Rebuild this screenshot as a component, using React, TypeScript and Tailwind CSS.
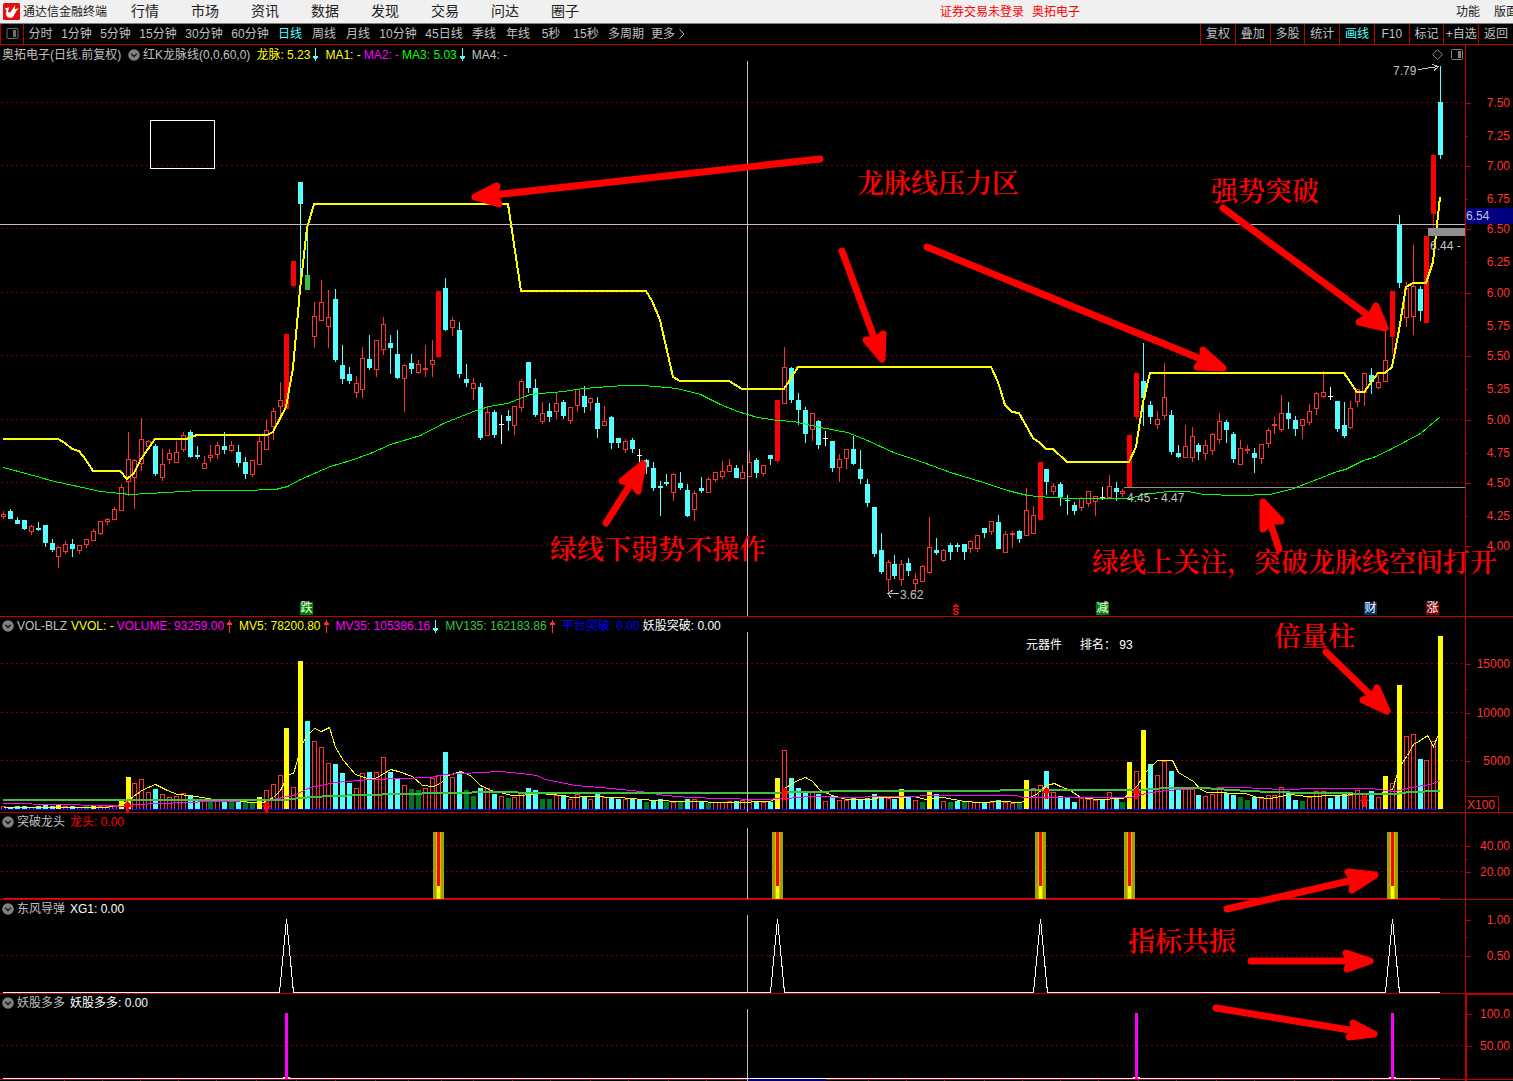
import React from "react";

const W = 1465;
const FULL = 1513;
const xAt = (i: number) => Math.floor(3.7 + i * 6.909);

/* kind high bodyTop bodyBottom low, one entry per trading day */
const CANDLES = `r 511 514 517 519|c 509 511 519 519|c 517 520 524 524|c 520 520 529 530|r 525 526 532 535|c 522 528 530 531|c 525 525 543 547|c 539 543 550 552|r 546 547 557 568|r 541 544 552 554|c 539 544 549 557|r 545 545 551 554|r 539 539 545 548|r 529 531 541 541|r 521 521 534 535|r 518 519 522 525|r 507 509 520 520|r 484 487 511 511|r 432 459 482 496|r 459 460 478 509|r 418 439 464 471|r 440 441 447 450|c 444 446 474 476|r 449 464 478 481|r 449 453 460 464|r 441 452 463 463|r 432 435 450 452|c 430 432 457 458|c 446 455 457 459|r 456 463 469 469|r 445 455 458 462|r 442 445 455 459|c 432 446 450 454|r 441 445 451 452|c 445 452 463 467|c 457 462 474 479|r 460 460 475 477|r 436 441 465 465|r 420 430 450 450|r 408 411 427 440|r 382 400 407 417|R 334 334 409 409|R 261 261 286 287|c 182 182 204 289|g 232 275 290 290|r 302 316 337 348|r 280 302 321 321|r 290 317 327 348|c 289 299 360 362|c 345 365 379 384|c 367 374 381 384|r 376 383 393 398|r 347 358 390 398|c 335 359 368 370|r 340 340 370 377|r 317 324 350 355|c 335 343 348 374|c 330 354 378 379|r 364 365 379 412|c 354 363 369 374|r 360 364 373 374|r 345 368 370 377|r 340 360 365 377|R 291 291 357 358|c 278 288 330 331|r 317 320 328 336|c 322 330 374 378|c 364 379 383 387|r 378 383 389 400|c 383 387 438 440|r 407 412 436 436|c 410 412 435 438|w 415 424 425 444|c 410 416 421 431|r 406 406 426 435|r 379 381 408 412|c 362 362 388 393|c 379 388 415 417|r 402 413 422 424|c 403 411 417 422|r 393 403 412 419|c 400 402 416 419|r 407 407 421 424|r 389 389 406 412|c 386 396 407 413|r 397 398 403 411|c 397 403 429 438|r 406 421 426 426|c 416 417 443 449|c 438 438 443 448|r 439 441 450 453|c 438 440 449 453|w 449 455 456 462|c 459 460 467 474|c 462 468 488 491|c 481 486 488 516|c 474 482 484 486|r 473 474 493 501|c 472 483 488 490|c 484 490 516 517|r 491 493 510 521|c 477 488 491 493|r 477 479 493 493|r 472 472 480 482|r 461 471 477 479|r 459 465 472 472|c 465 468 478 478|r 465 472 479 479|r 451 462 477 477|c 458 460 473 478|r 465 465 474 476|c 455 455 459 465|R 400 400 461 463|r 347 367 404 404|c 367 368 400 403|c 393 400 410 425|c 407 410 434 443|r 413 413 430 441|c 420 421 445 449|w 431 438 439 446|c 441 441 468 472|r 454 459 468 482|r 449 449 459 469|c 436 449 464 465|c 450 469 479 484|c 479 484 503 507|c 507 507 554 557|c 533 550 572 574|r 560 562 580 594|c 555 564 576 579|r 560 564 580 586|c 558 563 571 576|r 573 579 584 591|r 565 566 582 582|r 517 547 573 574|c 538 550 553 555|r 549 550 561 562|c 543 545 552 560|c 543 545 547 552|c 544 544 552 560|r 540 541 549 553|r 535 535 549 552|c 528 528 533 538|r 521 521 532 535|c 515 522 549 549|r 531 534 553 553|r 531 533 535 548|c 530 531 539 543|r 488 510 536 536|r 506 515 534 534|R 462 462 520 520|c 469 469 482 495|r 483 486 492 495|c 482 484 497 506|c 495 500 501 515|c 502 505 511 515|r 497 498 508 511|r 491 491 504 507|r 496 496 502 516|w 487 497 498 500|r 475 486 498 498|c 482 488 492 501|r 489 491 494 497|R 435 435 487 487|R 373 373 417 419|c 343 381 398 426|c 401 405 417 424|r 411 419 425 429|r 363 397 416 420|c 410 415 452 455|c 445 453 457 458|r 425 446 458 458|r 427 436 458 462|c 443 445 452 460|r 440 445 454 460|r 433 434 451 455|r 413 421 440 444|c 420 422 430 443|c 432 434 459 463|r 440 448 465 465|r 445 449 451 454|c 448 453 458 473|r 444 444 459 464|r 428 430 444 448|r 417 424 426 434|r 395 413 430 432|c 402 413 419 429|c 416 420 429 436|r 419 419 426 439|r 404 411 423 425|r 392 393 409 415|r 371 392 397 398|w 387 396 397 400|c 401 401 429 432|c 402 425 436 438|r 401 408 428 429|r 389 389 402 407|r 373 373 393 406|c 368 375 382 394|r 375 382 388 389|r 323 360 382 382|R 291 291 337 354|c 215 225 283 288|r 282 288 318 327|r 245 286 317 335|c 286 289 311 321|R 236 236 323 323|R 155 155 214 228|c 66 102 155 159`
  .split("|")
  .map((s) => {
    const [k, ...n] = s.split(" ");
    const [h, t, b, l] = n.map(Number);
    return { k, h, t, b, l };
  });

/* colour key and top edge of each volume bar */
const VOLUMES =
  `r806 c807 c806 c806 r807 c806 c805 c806 y805 r806 c806 r807 g806 y806 r806 r806 r805 y801 y777 r783 r779 r792 c789 r794 r797 r796 r793 c796 c801 r801 g801 r801 c801 g802 c801 g801 g802 y797 r790 r784 r775 y728 r787 y661 c721 r741 r747 r763 c764 c773 c783 r788 r773 c772 r772 r757 c772 c779 r785 g789 g790 r788 r778 r775 c752 r777 c772 g790 g796 c788 r788 c794 r796 g798 r797 r793 c788 c790 g799 g799 r795 c795 r799 r794 c797 r799 c794 r797 c797 c799 r799 c799 c799 g802 c801 c799 g802 r802 g802 c799 r799 c801 g803 r802 r802 r801 c801 r800 r800 c801 r802 c802 y778 r750 c778 c788 c792 r792 c794 r801 c796 r800 r800 c798 c799 c798 c794 c797 r798 c799 y789 c796 r800 g802 y792 c794 r801 g802 c801 g802 r801 r802 c802 r802 c800 r802 r803 g803 y780 r788 r785 c771 r792 c796 c798 c802 r798 r799 r800 c800 r792 c798 g802 y762 r771 y730 c764 r775 r761 c771 c788 r788 r789 c795 r796 r794 r787 c793 c795 g797 g800 c797 r798 r795 r795 r787 c792 c800 g801 r797 r791 r791 c798 c795 c793 r795 r790 r794 c791 r797 y776 r783 y685 r736 r734 c759 r760 r741 y636`
    .split(" ")
    .map((s) => ({ k: s[0], t: Number(s.slice(1)) }));

const DRAGON =
  "3,439 58,439 65,443 72,449 79,451 86,460 93,471 120,471 127,479 134,473 141,459 155,439 186,439 197,435 267,435 273,432 286,407 293,368 300,290 307,228 314,204 508,204 521,291 646,291 652,301 660,320 673,377 680,381 729,381 742,389 784,389 798,367 991,367 998,382 1005,405 1012,412 1019,413 1033,438 1040,443 1046,449 1053,449 1067,462 1129,462 1136,447 1143,402 1150,373 1344,373 1357,392 1364,392 1378,373 1385,373 1392,367 1399,330 1406,287 1413,283 1426,283 1433,262 1440,197";
const MA3 =
  "3,467 40,477 50,480 100,491 130,494 165,492 200,490 240,490 275,489 287,486 300,479 330,466 350,460 370,453 390,444 420,435 443,423 473,411 480,409 488,406 507,403 522,397 530,394 540,393 563,391 583,388 623,385 643,385 677,388 700,394 720,404 737,411 757,417 777,420 793,421 820,427 847,432 867,440 893,452 923,462 950,472 983,482 1007,490 1027,495 1050,497 1073,498 1130,498 1143,494 1168,491 1188,491 1203,494 1237,495 1270,494 1293,488 1337,471 1345,469 1363,460 1373,457 1390,449 1420,433 1440,416";
const MV5 =
  "3,807 100,807 117,806 127,801 133,796 143,789 155,784 167,790 177,794 190,795 213,799 230,801 263,802 273,797 280,790 288,774 293,773 302,743 307,735 314,728 321,731 329,727 335,747 343,760 355,774 370,779 377,777 390,769 398,771 412,776 422,785 433,786 440,783 448,775 460,771 470,775 480,785 493,791 500,792 511,795 521,795 536,793 554,794 571,797 589,796 618,797 643,799 654,800 682,801 732,802 770,801 777,797 784,788 795,781 805,777 812,781 820,790 832,795 846,799 871,799 879,797 900,797 914,796 925,799 943,797 964,801 979,802 1000,801 1021,802 1027,798 1036,794 1046,785 1054,783 1060,786 1070,790 1080,797 1097,799 1123,798 1130,792 1137,785 1145,772 1157,760 1172,760 1178,772 1193,781 1200,789 1207,792 1245,793 1257,797 1270,798 1290,794 1307,796 1337,795 1380,793 1392,789 1397,773 1402,762 1407,755 1413,744 1420,740 1427,735 1433,746 1438,734";
const MV35 =
  "3,803 60,804 100,805 125,806 135,804 160,803 210,801 270,800 282,797 293,795 310,787 335,782 370,779 430,777 445,774 480,772 500,771 520,773 536,775 545,779 560,782 575,785 600,787 640,791 665,795 690,797 720,798 760,799 785,798 810,796 850,797 880,796 960,795 1016,795 1022,797 1130,797 1145,793 1165,790 1200,788 1240,787 1262,788 1280,789 1320,788 1370,788 1395,791 1410,787 1430,784 1440,780";
const MV135 =
  "3,800 285,800 300,798 330,796 400,794 445,793 500,792 535,793 770,793 800,792 860,791 990,791 1010,790 1140,790 1165,788 1205,788 1230,790 1270,792 1310,793 1395,794 1410,792 1440,791";

const FILL: Record<string, string> = { c: "#54ffff", R: "#ff0000", g: "#40c040", y: "#ffff00" };

function Candle({ x, k, h, t, b, l }: { x: number; k: string; h: number; t: number; b: number; l: number }) {
  if (k === "w")
    return <path d={`M${x} ${h}h1V${l}h-1zM${x - 2} ${t}h5v1h-5z`} fill="#ffffff" />;
  if (k === "r")
    return (
      <g>
        <path d={`M${x} ${h}h1V${t}h-1zM${x} ${b}h1V${l}h-1z`} fill="#ff3232" />
        {b - t < 3 ? (
          <rect x={x - 2} y={t} width={5} height={b - t} fill="#ff3232" />
        ) : (
          <rect x={x - 1.5} y={t + 0.5} width={4} height={b - t - 1} fill="none" stroke="#ff3232" />
        )}
      </g>
    );
  const wick = k === "R" ? "#ff0000" : "#54ffff";
  return (
    <g>
      <rect x={x} y={h} width={1} height={l - h} fill={wick} />
      <rect x={x - 2} y={t} width={5} height={b - t} fill={FILL[k]} />
    </g>
  );
}

function Plot({ top, height, grid, label, children }: { top: number; height: number; grid: number[]; label: string; children: React.ReactNode }) {
  return (
    <svg
      role="img"
      aria-label={label}
      viewBox={`0 ${top} ${W} ${height}`}
      height={height}
      preserveAspectRatio="none"
      shapeRendering="crispEdges"
      className="block w-full"
    >
      {grid.map((y) => (
        <line key={y} x1={1} x2={W} y1={y + 0.5} y2={y + 0.5} stroke="#800000" strokeDasharray="2 3" />
      ))}
      {children}
      <rect x={747} y={top} width={1} height={height} fill="#c0c0c0" />
    </svg>
  );
}

type Tick = { y: number; text?: string };

const MINOR = new Set(["7.25", "6.75", "6.25", "5.75", "5.25", "4.75", "4.25"]);

function Axis({ top, ticks, bright, children }: { top: number; ticks: Tick[]; bright?: boolean; children?: React.ReactNode }) {
  return (
    <div className={bright ? "relative w-12 flex-none border-l-2 border-t border-[#c00000]" : "relative w-12 flex-none border-l border-[#c00000]"}>
      {ticks.map((t) => (
        <div
          key={t.y}
          className="absolute inset-x-0 flex h-3 -translate-y-1/2 items-center justify-between pr-[3px] text-xs leading-3 text-[#ff3232]"
          style={{ top: t.y - top }}
        >
          <span className={t.text && !MINOR.has(t.text) ? "h-px w-[5px] bg-[#c00000]" : "h-px w-[2px] bg-[#c00000]"} />
          <span>{t.text}</span>
        </div>
      ))}
      {children}
    </div>
  );
}

function Fold({ name }: { name: string }) {
  return (
    <button type="button" aria-label={`${name} 菜单`} className="block size-3 flex-none">
      <svg viewBox="0 0 13 13" className="size-3">
        <circle cx="6.5" cy="6.5" r="6.3" fill="#808080" />
        <path d="M3.5 5.2l3 3 3-3" fill="none" stroke="#101010" strokeWidth="1.4" />
      </svg>
    </button>
  );
}

function Trend({ up }: { up?: boolean }) {
  return (
    <svg viewBox="0 0 5 13" className="mr-1 h-[13px] w-[5px] flex-none" shapeRendering="crispEdges" aria-hidden="true">
      {up ? (
        <path d="M2 0h1v13H2zM1 2h3v1H1zM0 3h5v2H0z" fill="#ff3232" />
      ) : (
        <path d="M2 0h1v13H2zM1 10h3v1H1zM0 8h5v2H0z" fill="#54ffff" />
      )}
    </svg>
  );
}

function Head({ children, tall }: { children: React.ReactNode; tall?: boolean }) {
  return (
    <header
      className={
        tall
          ? "flex h-4 items-center gap-[3px] whitespace-nowrap pl-[2px] pt-[3px] text-xs leading-4"
          : "flex h-[15px] items-center gap-[3px] whitespace-nowrap pl-[2px] pt-[3px] text-xs leading-[15px]"
      }
    >
      {children}
    </header>
  );
}

const PERIODS: [string, string][] = [
  ["分时", "w-[33px]"],
  ["1分钟", "w-[39px]"],
  ["5分钟", "w-[39px]"],
  ["15分钟", "w-[46px]"],
  ["30分钟", "w-[46px]"],
  ["60分钟", "w-[46px]"],
  ["日线", "w-[34px]"],
  ["周线", "w-[34px]"],
  ["月线", "w-[34px]"],
  ["10分钟", "w-[46px]"],
  ["45日线", "w-[46px]"],
  ["季线", "w-[34px]"],
  ["年线", "w-[34px]"],
  ["5秒", "w-[32px]"],
  ["15秒", "w-[38px]"],
  ["多周期", "w-[42px]"],
];

/* tail, tip and the two barb ends of each marker arrow */
const ARROWS = [
  [820, 159, 475, 197, 497, 186, 499, 204],
  [842, 251, 882, 359, 866, 340, 883, 334],
  [927, 247, 1223, 368, 1203, 350, 1197, 367],
  [1223, 208, 1385, 328, 1376, 306, 1359, 322],
  [606, 523, 643, 464, 622, 481, 638, 491],
  [1279, 549, 1263, 502, 1281, 521, 1263, 529],
  [1326, 652, 1387, 711, 1377, 688, 1363, 700],
  [1227, 909, 1375, 875, 1348, 872, 1352, 890],
  [1251, 961, 1370, 961, 1346, 953, 1347, 969],
  [1216, 1008, 1374, 1034, 1353, 1023, 1349, 1037],
];

const NOTES: [number, number, string][] = [
  [857, 182, "龙脉线压力区"],
  [1211, 190, "强势突破"],
  [550, 548, "绿线下弱势不操作"],
  [1092, 561, "绿线上关注，突破龙脉线空间打开"],
  [1274, 635, "倍量柱"],
  [1128, 940, "指标共振"],
];

const LABELS: [number, number, string, string][] = [
  [1393, 71, "7.79", "text-[#c0c0c0]"],
  [900, 595, "3.62", "text-[#c0c0c0]"],
  [1127, 498, "4.45 - 4.47", "text-[#c0c0c0]"],
  [1430, 246, "6.44 -", "text-[#c0c0c0]"],
  [1026, 645, "元器件", "text-white"],
  [1080, 645, "排名： 93", "text-white"],
];

const BADGES: [number, string, string][] = [
  [300, "跌", "bg-[#008000]"],
  [1096, "减", "bg-[#008000]"],
  [1364, "财", "bg-[#003366]"],
  [1426, "涨", "bg-[#800000]"],
];

const CHART_TOP = 45;
const pct = (x: number) => `${(x / FULL) * 100}%`;

export default function App() {
  return (
    <main className="flex min-h-screen flex-col overflow-hidden bg-black font-['Liberation_Sans','Noto_Sans_CJK_SC',sans-serif] text-xs text-[#c0c0c0]">
      <div className="flex h-6 items-center border-b border-[#808080] bg-[#f0f0f0] pl-[3px] text-[#202020]">
        <svg viewBox="0 0 17 17" className="size-[17px] flex-none" aria-hidden="true">
          <rect width="17" height="17" rx="1.5" fill="#e01010" />
          <path d="M1.500 5.800L6.200 4.300 5 8.500Q5.600 10.200 7.600 9L12.300 2 11.600 6.200 15.800 5.200Q12.600 8 11.400 11.500 9.800 15.200 6.500 14.800 3 14 3 10.500L3.600 7.200z" fill="#fff" />
        </svg>
        <h1 className="ml-[3px] w-[92px] whitespace-nowrap text-xs">通达信金融终端</h1>
        <nav aria-label="主菜单" className="flex pb-[2px] text-sm">
          {["行情", "市场", "资讯", "数据", "发现", "交易", "问达", "圈子"].map((m) => (
            <button key={m} type="button" className="w-[60px] text-center leading-5">
              {m}
            </button>
          ))}
        </nav>
        <p className="ml-auto mr-[376px] flex gap-2 whitespace-nowrap text-[#ff0000]">
          <span>证券交易未登录</span>
          <span>奥拓电子</span>
        </p>
        <div className="flex w-[57px] flex-none gap-[14px] overflow-hidden whitespace-nowrap">
          <button type="button" className="flex-none">功能</button>
          <button type="button" className="flex-none">版面</button>
        </div>
      </div>

      <div className="flex h-[21px] border-b border-l border-[#c00000]">
        <button type="button" aria-label="侧栏" className="flex w-[23px] flex-none items-center justify-center border-r border-[#c00000]">
          <svg viewBox="0 0 13 12" className="h-3 w-[13px]" fill="none" stroke="#707070">
            <rect x="1" y="0.500" width="11" height="10" rx="1" />
            <rect x="7.500" y="2.500" width="2" height="6" fill="#707070" />
          </svg>
        </button>
        <nav aria-label="周期" className="flex whitespace-nowrap">
          {PERIODS.map(([p, w]) => (
            <button key={p} type="button" className={`${w} text-center leading-5 ${p === "日线" ? "text-[#54ffff]" : ""}`}>
              {p}
            </button>
          ))}
          <button type="button" className="flex w-[42px] items-center justify-center gap-1 leading-5">
            更多
            <svg viewBox="0 0 6 10" className="h-[10px] w-[6px]" fill="none" stroke="#c0c0c0">
              <path d="M0.500 0.500L5 5 0.500 9.500" />
            </svg>
          </button>
        </nav>
        <nav aria-label="工具" className="ml-auto grid w-[313px] grid-cols-9">
          {["复权", "叠加", "多股", "统计", "画线", "F10", "标记", "+自选", "返回"].map((t) => (
            <button key={t} type="button" className={`whitespace-nowrap border-l border-[#c00000] text-center leading-5 ${t === "画线" ? "text-[#54ffff]" : ""}`}>
              {t}
            </button>
          ))}
        </nav>
      </div>

      <div className="relative">
        <section className="flex border-b border-[#c00000]">
          <div className="min-w-0 flex-1">
            <Head tall>
              <h2 className="w-[123px]">奥拓电子(日线.前复权)</h2>
              <Fold name="红K龙脉线" />
              <span>红K龙脉线(0,0,60,0)</span>
              <span className="ml-[3px] text-[#ffff00]">龙脉: 5.23</span>
              <Trend />
              <span className="text-[#ffff00]">MA1: -</span>
              <span className="text-[#ff00ff]">MA2: -</span>
              <span className="text-[#00ff00]">MA3: 5.03</span>
              <Trend />
              <span>MA4: -</span>
              <span className="ml-auto flex items-center gap-2 pr-[2px]">
                <svg viewBox="0 0 11 11" className="size-[11px]" fill="none" stroke="#909090">
                  <path d="M5.500 0.700L10.300 5.500 5.500 10.300 0.700 5.500z" />
                </svg>
                <svg viewBox="0 0 12 11" className="h-[11px] w-3" fill="none" stroke="#808080">
                  <rect x="0.500" y="0.500" width="11" height="10" rx="1" />
                  <rect x="7.500" y="2.500" width="2" height="6" fill="#808080" />
                </svg>
              </span>
            </Head>
            <Plot top={61} height={555} grid={[102, 165, 228, 292, 355, 419, 482, 545]} label="日线 K 线图">
              <rect x={150.5} y={120.5} width={64} height={48} fill="none" stroke="#ffffff" />
              {CANDLES.map((c, i) => (
                <Candle key={i} x={xAt(i)} {...c} />
              ))}
              <polyline points={MA3} transform="translate(0.5 0.5)" fill="none" stroke="#00ff00" />
              <polyline points={DRAGON} fill="none" stroke="#ffff00" strokeWidth={2} />
              <rect x={1124} y={487} width={341} height={1} fill="#909090" />
              <rect x={1428} y={228} width={37} height={8} fill="#909090" />
              <rect x={0} y={224} width={W} height={1} fill="#c0c0c0" />
              <path d="M1418.500 69.500L1438 66.500M1432.500 64.500L1438.500 66.500 1434 70.500" fill="none" stroke="#c0c0c0" />
              <path d="M888 593.500H899M893 590L888 593.500 891 598" fill="none" stroke="#c0c0c0" />
              <path
                d="M955 604h2v1h1v1h1v1h-6v-1h1v-1h1zM954 608h4v1h1v1h-2v-1h-2v2h3v1h1v2h-1v1h-4v-1h-1v-1h2v1h2v-2h-3v-1h-1v-2h1z"
                fill="#ff0000"
              />
            </Plot>
          </div>
          <Axis
            top={45}
            ticks={[
              { y: 103, text: "7.50" },
              { y: 136, text: "7.25" },
              { y: 166, text: "7.00" },
              { y: 199, text: "6.75" },
              { y: 229, text: "6.50" },
              { y: 262, text: "6.25" },
              { y: 293, text: "6.00" },
              { y: 326, text: "5.75" },
              { y: 356, text: "5.50" },
              { y: 389, text: "5.25" },
              { y: 420, text: "5.00" },
              { y: 453, text: "4.75" },
              { y: 483, text: "4.50" },
              { y: 516, text: "4.25" },
              { y: 546, text: "4.00" },
            ]}
          >
            <output className="absolute inset-x-0 h-4 bg-[#000080] text-xs leading-4 text-[#c0c0e0]" style={{ top: 208 - CHART_TOP }}>
              6.54
            </output>
          </Axis>
        </section>

        <section className="flex border-b border-[#c00000]">
          <div className="min-w-0 flex-1">
            <Head>
              <Fold name="VOL-BLZ" />
              <h2>VOL-BLZ</h2>
              <span className="ml-px text-[#ffff00]">VVOL: -</span>
              <span className="text-[#ff00ff]">VOLUME: 93259.00</span>
              <Trend up />
              <span className="text-[#ffff00]">MV5: 78200.80</span>
              <Trend up />
              <span className="text-[#ff00ff]">MV35: 105386.16</span>
              <Trend />
              <span className="text-[#40c040]">MV135: 162183.86</span>
              <Trend up />
              <span className="text-[#0000ff]">平台突破: 0.00</span>
              <span className="text-white">妖股突破: 0.00</span>
            </Head>
            <Plot top={632} height={180} grid={[663, 712, 760]} label="成交量">
              {VOLUMES.map(({ k, t }, i) => {
                const x = xAt(i) - 2;
                return k === "r" ? (
                  <path key={i} d={`M${x + 0.5} 809V${t + 0.5}h4V809`} fill="none" stroke="#ff3232" />
                ) : (
                  <rect key={i} x={x} y={t} width={5} height={809 - t} fill={k === "g" ? "#007820" : FILL[k]} />
                );
              })}
              <rect x={1} y={809} width={1440} height={1} fill="#0000ff" />
              <polyline points={MV5} transform="translate(0.5 0.5)" fill="none" stroke="#ffff00" />
              <polyline points={MV35} transform="translate(0.5 0.5)" fill="none" stroke="#ff00ff" />
              <polyline points={MV135} fill="none" stroke="#40c040" strokeWidth={2} />
              {[
                [127, 801],
                [266, 801],
                [784, 788],
                [1046, 787],
                [1136, 787],
                [1364, 795],
              ].map(([x, y]) => (
                <path key={x} d={`M${x} ${y}h1l4 6h-3v6h-3v-6h-3z`} fill="#ff0000" />
              ))}
            </Plot>
          </div>
          <Axis
            top={617}
            ticks={[
              { y: 664, text: "15000" },
              { y: 689 },
              { y: 713, text: "10000" },
              { y: 737 },
              { y: 761, text: "5000" },
            ]}
          >
            <span className="absolute bottom-0 left-0 h-4 w-[33px] border-r border-t border-[#c00000] pl-px text-xs leading-4 text-[#ff3232]">X100</span>
          </Axis>
        </section>

        <section className="flex border-b border-[#c00000]">
          <div className="min-w-0 flex-1">
            <Head>
              <Fold name="突破龙头" />
              <h2>突破龙头</h2>
              <span className="ml-[2px] text-[#ff0000]">龙头: 0.00</span>
            </Head>
            <Plot top={828} height={71} grid={[845, 871]} label="突破龙头">
              <rect x={3} y={898} width={1437} height={1} fill="#ff0000" />
              {[63, 112, 150, 163, 201].map((i) => {
                const x = xAt(i);
                return (
                  <g key={i}>
                    <rect x={x - 5} y={832} width={11} height={67} fill="#a0a000" />
                    <rect x={x - 2} y={832} width={5} height={67} fill="#d0c000" />
                    <rect x={x - 1} y={832} width={3} height={54} fill="#ff0000" />
                    <rect x={x - 1} y={886} width={3} height={13} fill="#ffff00" />
                  </g>
                );
              })}
            </Plot>
          </div>
          <Axis top={813} ticks={[{ y: 846, text: "40.00" }, { y: 859 }, { y: 872, text: "20.00" }]} />
        </section>

        <section className="flex border-b border-[#c00000]">
          <div className="min-w-0 flex-1">
            <Head>
              <Fold name="东风导弹" />
              <h2>东风导弹</h2>
              <span className="ml-[2px] text-white">XG1: 0.00</span>
            </Head>
            <Plot top={915} height={78} grid={[955]} label="东风导弹">
              <path
                d={`M3 992.500${[41, 112, 150, 201].map((i) => `H${xAt(i) - 6.5}L${xAt(i) + 0.5} 919L${xAt(i) + 7.5} 992.500`).join("")}H1440`}
                fill="none"
                stroke="#ffffff"
              />
            </Plot>
          </div>
          <Axis top={900} ticks={[{ y: 920, text: "1.00" }, { y: 937 }, { y: 956, text: "0.50" }]} />
        </section>

        <section className="flex">
          <div className="min-w-0 flex-1">
            <Head>
              <Fold name="妖股多多" />
              <h2>妖股多多</h2>
              <span className="ml-[2px] text-white">妖股多多: 0.00</span>
            </Head>
            <Plot top={1009} height={72} grid={[1045]} label="妖股多多">
              <rect x={3} y={1078} width={1437} height={1} fill="#ffffff" />
              {[41, 164, 201].map((i) => (
                <g key={i}>
                  <rect x={xAt(i) - 3} y={1077} width={7} height={1} fill="#ffffff" />
                  <rect x={xAt(i) - 1} y={1013} width={3} height={66} fill="#ff00ff" />
                </g>
              ))}
              <rect x={0} y={1079} width={W} height={1} fill="#c00000" />
              {[64, 102, 140, 178, 216, 256, 296, 335, 375, 408, 441, 473, 512, 550, 590, 628, 668, 706, 868, 906, 944, 984, 1022, 1060, 1098, 1138, 1176, 1216, 1254, 1294, 1332, 1372, 1410].map((x) => (
                <rect key={x} x={x} y={1080} width={1} height={1} fill="#c00000" />
              ))}
              <rect x={748} y={1079} width={78} height={2} fill="#000080" />
            </Plot>
          </div>
          <Axis top={995} bright ticks={[{ y: 1014, text: "100.0" }, { y: 1046, text: "50.00" }]}>
            <span className="absolute inset-x-0 bottom-px h-px bg-[#c00000]" />
          </Axis>
        </section>

        <div className="pointer-events-none absolute inset-0">
          <svg viewBox={`0 ${CHART_TOP} ${FULL} 1036`} preserveAspectRatio="none" className="block size-full" aria-hidden="true">
            {ARROWS.map(([x1, y1, x2, y2, ax, ay, bx, by], i) => (
              <path
                key={i}
                stroke="#ff0000"
                strokeWidth={7}
                strokeLinecap="round"
                strokeLinejoin="round"
                fill="#ff0000"
                d={`M${x1} ${y1}L${x2} ${y2}M${ax} ${ay}L${x2} ${y2}L${bx} ${by}L${(ax + bx) * 0.42 + x2 * 0.16} ${(ay + by) * 0.42 + y2 * 0.16}z`}
              />
            ))}
          </svg>
          {NOTES.map(([x, y, text]) => (
            <p
              key={text}
              className="absolute -translate-y-1/2 whitespace-nowrap font-['Noto_Serif_CJK_SC','SimSun','Noto_Sans_CJK_SC',serif] text-[27px] font-semibold leading-8 text-[#ff0000]"
              style={{ left: pct(x), top: y - CHART_TOP }}
            >
              {text}
            </p>
          ))}
          {LABELS.map(([x, y, text, color]) => (
            <span key={text} className={`absolute -translate-y-1/2 whitespace-nowrap leading-4 ${color}`} style={{ left: pct(x), top: y - CHART_TOP }}>
              {text}
            </span>
          ))}
          {BADGES.map(([x, text, color]) => (
            <span key={text} className={`absolute size-[13px] text-center leading-[13px] text-white ${color}`} style={{ left: pct(x), top: 602 - CHART_TOP }}>
              {text}
            </span>
          ))}
        </div>
      </div>
    </main>
  );
}
